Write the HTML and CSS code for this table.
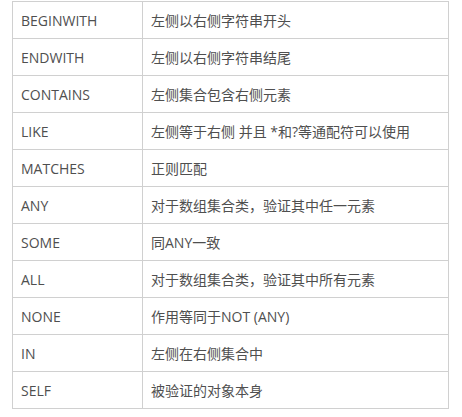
FILE: index.html
```html
<!DOCTYPE html>
<html>
<head>
<meta charset="utf-8">
<link rel="stylesheet" href="styles.css">
</head>
<body>
<table class="ops">
<tr><td class="k">BEGINWITH</td><td class="v">左侧以右侧字符串开头</td></tr>
<tr><td class="k">ENDWITH</td><td class="v">左侧以右侧字符串结尾</td></tr>
<tr><td class="k">CONTAINS</td><td class="v">左侧集合包含右侧元素</td></tr>
<tr><td class="k">LIKE</td><td class="v">左侧等于右侧 并且 *和?等通配符可以使用</td></tr>
<tr><td class="k">MATCHES</td><td class="v">正则匹配</td></tr>
<tr><td class="k">ANY</td><td class="v">对于数组集合类，验证其中任一元素</td></tr>
<tr><td class="k">SOME</td><td class="v">同ANY一致</td></tr>
<tr><td class="k">ALL</td><td class="v">对于数组集合类，验证其中所有元素</td></tr>
<tr><td class="k">NONE</td><td class="v">作用等同于NOT (ANY)</td></tr>
<tr><td class="k">IN</td><td class="v">左侧在右侧集合中</td></tr>
<tr><td class="k">SELF</td><td class="v">被验证的对象本身</td></tr>
</table>
</body>
</html>
```
FILE: styles.css
```css
html, body {
  margin: 0;
  padding: 0;
  background: #fff;
}
body {
  padding: 1px 0 0 12px;
  font-family: "Open Sans", "Noto Sans CJK SC", sans-serif;
  font-size: 14px;
  color: #4f4f4f;
}
.ops {
  border-collapse: collapse;
  width: 437px;
}
.ops td {
  border: 1px solid #d0d0d0;
  height: 37px;
  padding: 0 8px;
  box-sizing: border-box;
  vertical-align: middle;
}
.ops .k {
  width: 130px;
}
```
